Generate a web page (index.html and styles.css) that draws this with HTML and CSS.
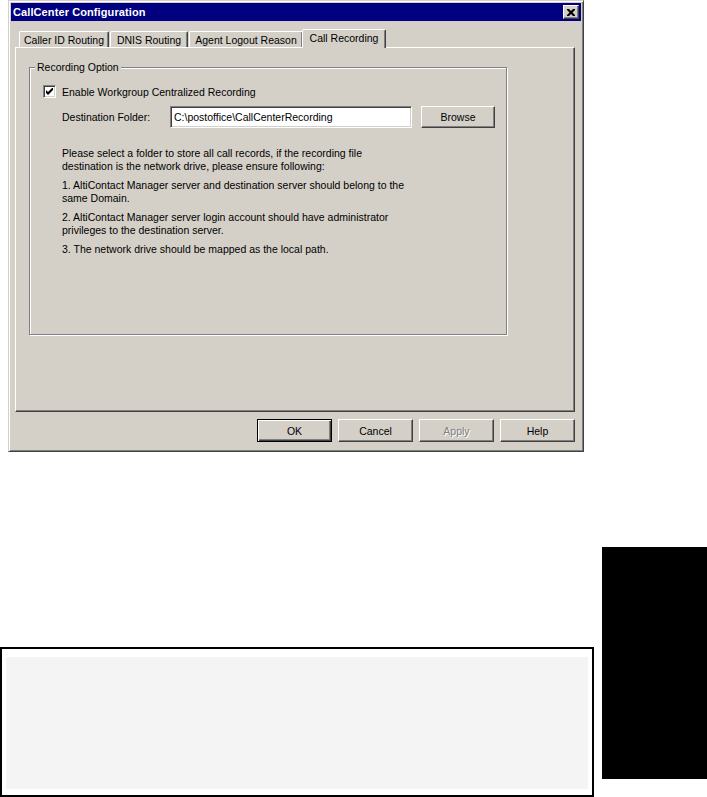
FILE: index.html
```html
<!DOCTYPE html>
<html lang="en">
<head>
    <meta charset="UTF-8">
    <title>CallCenter Configuration</title>
    <link rel="stylesheet" href="styles.css">
</head>
<body>
    <div class="dialog">
        <div class="titlebar">
            <span class="title">CallCenter Configuration</span>
            <span class="close-btn">
                <svg width="8" height="7" viewBox="0 0 8 7">
                    <path d="M0 0h2l2 2 2-2h2v1L5.5 3.5 8 6v1H6L4 5 2 7H0V6l2.5-2.5L0 1z" fill="#000"/>
                </svg>
            </span>
        </div>

        <div class="tabs">
            <div class="tab tab-caller">Caller ID Routing</div>
            <div class="tab tab-dnis">DNIS Routing</div>
            <div class="tab tab-agent">Agent Logout Reason</div>
            <div class="tab tab-record active">Call Recording</div>
        </div>

        <div class="panel">
            <fieldset class="group">
                <legend>Recording Option</legend>

                <div class="check-row">
                    <span class="checkbox">
                        <svg width="7" height="7" viewBox="0 0 7 7">
                            <path d="M0 2v3l2 2 5-5V-1L2 4z" fill="#000"/>
                        </svg>
                    </span>
                    <span>Enable Workgroup Centralized Recording</span>
                </div>

                <div class="folder-row">
                    <span class="folder-label">Destination Folder:</span>
                    <div class="textbox">C:\postoffice\CallCenterRecording</div>
                    <div class="btn browse">Browse</div>
                </div>

                <div class="notes">
                    <p>Please select a folder to store all call records, if the recording file<br>destination is the network drive, please ensure following:</p>
                    <p>1. AltiContact Manager server and destination server should belong to the<br>same Domain.</p>
                    <p>2. AltiContact Manager server login account should have administrator<br>privileges to the destination server.</p>
                    <p>3. The network drive should be mapped as the local path.</p>
                </div>
            </fieldset>
        </div>

        <div class="button-row">
            <div class="btn default">OK</div>
            <div class="btn">Cancel</div>
            <div class="btn disabled">Apply</div>
            <div class="btn">Help</div>
        </div>
    </div>

    <div class="lower">
        <div class="note-box">
            <div class="note-inner"></div>
        </div>
        <div class="side-tab"></div>
    </div>
</body>
</html>
```

FILE: styles.css
```css
* {
    margin: 0;
    padding: 0;
    box-sizing: border-box;
}

body {
    font-family: "Liberation Sans", Arial, sans-serif;
    font-size: 10.5px;
    color: #000;
    background-color: #fff;
    width: 707px;
    height: 797px;
    overflow: hidden;
}

/* window */

.dialog {
    margin-left: 8px;
    width: 576px;
    height: 452px;
    background-color: #d4d0c8;
    border: 1px solid;
    border-color: #d4d0c8 #404040 #404040 #d4d0c8;
    box-shadow: inset 1px 1px 0 #fff, inset -1px -1px 0 #808080;
    padding: 2px;
}

.titlebar {
    height: 18px;
    background-color: #000080;
    display: flex;
    align-items: center;
    justify-content: space-between;
    padding: 0 2px 0 2px;
}

.title {
    color: #fff;
    font-weight: bold;
    font-size: 11px;
    letter-spacing: 0.1px;
}

.close-btn {
    width: 16px;
    height: 14px;
    background-color: #d4d0c8;
    border: 1px solid;
    border-color: #fff #404040 #404040 #fff;
    box-shadow: inset -1px -1px 0 #808080;
    display: flex;
    align-items: center;
    justify-content: center;
}

/* tabs */

.tabs {
    display: flex;
    align-items: flex-end;
    margin: 8px 0 0 8px;
    height: 18px;
    position: relative;
    z-index: 1;
}

.tab {
    height: 16px;
    border: 1px solid;
    border-bottom: none;
    border-color: #fff #404040 transparent #fff;
    border-radius: 2px 2px 0 0;
    box-shadow: inset -1px 0 0 #808080;
    display: flex;
    align-items: center;
    justify-content: center;
    white-space: nowrap;
}

.tab + .tab {
    margin-left: 1px;
}

.tab-caller { width: 90px; }
.tab-dnis { width: 78px; }
.tab-agent { width: 114px; }
.tab-record { width: 84px; }

.tab.active {
    height: 19px;
    margin: 0 0 -1px -1px;
    padding-bottom: 2px;
    background-color: #d4d0c8;
}

/* tab page */

.panel {
    margin-left: 4px;
    width: 560px;
    height: 365px;
    border: 1px solid;
    border-color: #fff #404040 #404040 #fff;
    box-shadow: inset -1px -1px 0 #808080;
    padding: 13px 0 0 13px;
}

.group {
    width: 478px;
    height: 274px;
    border: 1px solid #808080;
    box-shadow: inset 1px 1px 0 #fff, 1px 1px 0 #fff;
    padding: 11px 0 0 13px;
}

.group legend {
    margin-left: -8px;
    padding: 0 2px;
    background-color: #d4d0c8;
    line-height: 13px;
}

.check-row {
    display: flex;
    align-items: center;
    gap: 6px;
    height: 13px;
}

.checkbox {
    width: 13px;
    height: 13px;
    background-color: #fff;
    border: 1px solid;
    border-color: #808080 #fff #fff #808080;
    box-shadow: inset 1px 1px 0 #404040, inset -1px -1px 0 #d4d0c8;
    display: flex;
    align-items: center;
    justify-content: center;
}

.folder-row {
    display: flex;
    align-items: center;
    margin: 8px 0 0 19px;
    height: 22px;
}

.folder-label {
    width: 108px;
}

.textbox {
    width: 242px;
    height: 22px;
    background-color: #fff;
    border: 1px solid;
    border-color: #808080 #fff #fff #808080;
    box-shadow: inset 1px 1px 0 #404040, inset -1px -1px 0 #d4d0c8;
    padding: 0 3px;
    display: flex;
    align-items: center;
}

.btn {
    width: 75px;
    height: 23px;
    border: 1px solid;
    border-color: #fff #404040 #404040 #fff;
    box-shadow: inset -1px -1px 0 #808080;
    display: flex;
    align-items: center;
    justify-content: center;
    background-color: #d4d0c8;
}

.btn.browse {
    width: 74px;
    height: 22px;
    margin-left: 9px;
}

.btn.default {
    border: 1px solid #000;
    box-shadow: inset 1px 1px 0 #fff, inset -1px -1px 0 #404040, inset -2px -2px 0 #808080;
}

.btn.disabled {
    color: #808080;
    text-shadow: 1px 1px 0 #fff;
}

.notes {
    margin: 19px 0 0 19px;
    line-height: 13px;
}

.notes p {
    margin-bottom: 6px;
}

.button-row {
    display: flex;
    justify-content: flex-end;
    gap: 6px;
    margin-top: 7px;
    padding-right: 6px;
}

/* page content below the screenshot */

.lower {
    display: flex;
    align-items: flex-start;
    margin-top: 95px;
}

.note-box {
    margin-top: 100px;
    width: 594px;
    height: 150px;
    border: 2px solid #000;
    padding: 8px 4px 6px 4px;
}

.note-inner {
    height: 100%;
    background-color: #f4f4f4;
}

.side-tab {
    margin-left: 8px;
    width: 105px;
    height: 232px;
    background-color: #000;
}
```
